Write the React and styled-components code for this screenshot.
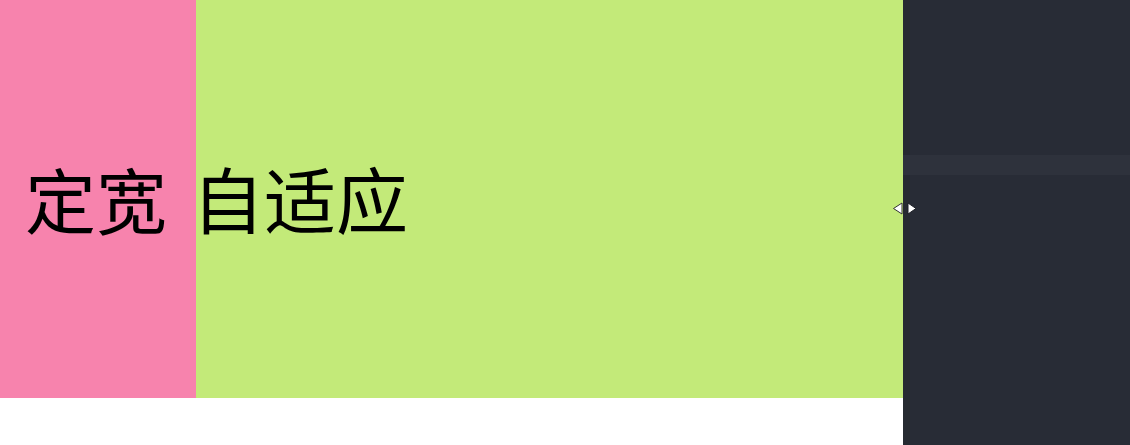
import React from 'react';
import styled, { createGlobalStyle } from 'styled-components';

const GlobalStyle = createGlobalStyle`
    html, body {
        margin: 0;
        padding: 0;
        height: 100%;
        background: #ffffff;
        font-family: "Noto Sans CJK SC", "Noto Sans", sans-serif;
    }
    #root {
        height: 100%;
    }
`;

const Page = styled.div`
    display: flex;
    height: 445px;
    width: 1130px;
    overflow: hidden;
`;

const Main = styled.div`
    flex: 1;
    display: flex;
    flex-direction: column;
`;

const Row = styled.div`
    display: flex;
    height: 398px;
`;

// 고정폭 칼럼
const Fixed = styled.div`
    width: 196px;
    flex-shrink: 0;
    box-sizing: border-box;
    padding-left: 25px;
    background-color: #f783ad;
    display: flex;
    align-items: center;
`;

// 자동 칼럼
const Fluid = styled.div`
    flex: 1;
    background-color: #c3ea79;
    display: flex;
    align-items: center;
`;

const Label = styled.span`
    font-size: ${props => props.size || 72}px;
    line-height: 1;
    color: #000;
    white-space: nowrap;
    margin-top: -4px;
    margin-left: ${props => props.shift || 0}px;
`;

const Panel = styled.aside`
    position: relative;
    width: 227px;
    flex-shrink: 0;
    background-color: #282c36;
    border-left: 7px solid #262a31;
    box-sizing: border-box;
    display: flex;
    flex-direction: column;
    padding-top: 155px;
`;

const Band = styled.div`
    height: 20px;
    margin-left: -7px;
    background-color: #2e323c;
`;

const Resizer = styled.svg`
    position: absolute;
    left: -20px;
    top: 200px;
`;

const App = () => {
    return (
    <>
        <GlobalStyle />
        <Page>
            <Main>
                <Row>
                    <Fixed><Label size={71}>定宽</Label></Fixed>
                    <Fluid><Label shift={-4}>自适应</Label></Fluid>
                </Row>
            </Main>
            <Panel>
                <Band />
                <Resizer width="30" height="18" viewBox="0 0 30 18">
                    <polygon points="3.5,8.5 12,3 12,14" fill="#ffffff" stroke="#333" strokeWidth="1" />
                    <polygon points="18,3 26,8.5 18,14" fill="#ffffff" stroke="#1c1f26" strokeWidth="1" />
                </Resizer>
            </Panel>
        </Page>
    </>
    );
};

export default App;
